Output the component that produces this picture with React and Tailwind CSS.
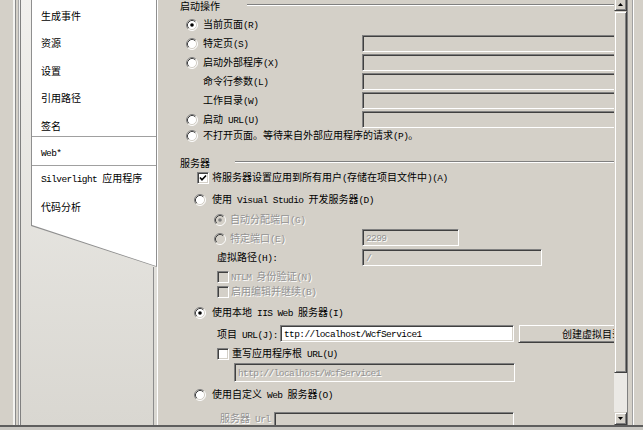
import React from 'react';

const ASCII = /^[\x20-\x7e]+$/;

const sunken =
  'border border-t-[#808080] border-l-[#808080] border-b-white border-r-white shadow-[inset_1px_1px_0_#404040,inset_-1px_-1px_0_#d4d0c8]';
const raised =
  'border border-t-[#d4d0c8] border-l-[#d4d0c8] border-b-[#404040] border-r-[#404040] shadow-[inset_1px_1px_0_#ffffff,inset_-1px_-1px_0_#808080]';

// CJK in Noto, half-width ASCII in a narrow mono, like SimSun
function Txt({ children, dim = false }) {
  const parts = String(children).split(/([\x20-\x7e]+)/).filter(Boolean);
  return (
    <span
      className={`whitespace-pre leading-[12px] ${
        dim ? 'text-[#939393] [text-shadow:1px_1px_0_#ffffff]' : 'text-black'
      }`}
    >
      {parts.map((p, i) =>
        ASCII.test(p) ? (
          <span key={i} className="font-['Liberation_Mono',monospace] text-[9.5px] tracking-[-0.6px]">
            {p}
          </span>
        ) : (
          <span key={i}>{p}</span>
        )
      )}
    </span>
  );
}

function Radio({ checked = false, dim = false }) {
  return (
    <svg width="12" height="12" viewBox="0 0 12 12" className="shrink-0">
      <circle cx="6" cy="6" r="5" fill={dim ? '#d4d0c8' : '#ffffff'} />
      <path d="M2.11 9.89 A5.5 5.5 0 0 1 9.89 2.11" fill="none" stroke="#808080" />
      <path d="M9.89 2.11 A5.5 5.5 0 0 1 2.11 9.89" fill="none" stroke="#ffffff" />
      <path d="M2.82 9.18 A4.5 4.5 0 0 1 9.18 2.82" fill="none" stroke="#404040" />
      <path d="M9.18 2.82 A4.5 4.5 0 0 1 2.82 9.18" fill="none" stroke="#d4d0c8" />
      {checked && <circle cx="6" cy="6" r="1.8" fill={dim ? '#808080' : '#000000'} />}
    </svg>
  );
}

function Check({ checked = false, dim = false }) {
  return (
    <span
      className={`w-[12px] h-[12px] shrink-0 flex items-center justify-center ${sunken} ${
        dim ? 'bg-[#d4d0c8]' : 'bg-white'
      }`}
    >
      {checked && (
        <svg width="8" height="8" viewBox="0 0 8 8">
          <polyline points="1,3.5 3,5.8 7,1.5" fill="none" stroke="#000" strokeWidth="1.6" />
        </svg>
      )}
    </span>
  );
}

function Field({ className = '', white = false, dim = false, children }) {
  return (
    <div
      className={`${sunken} ${white ? 'bg-white' : 'bg-[#d4d0c8]'} shrink-0 flex items-center pl-[3px] overflow-hidden ${className}`}
    >
      {children && <Txt dim={dim}>{children}</Txt>}
    </div>
  );
}

function Group({ label, labelW, className = '' }) {
  return (
    <div className={`flex items-center shrink-0 ${className}`}>
      <div className={`shrink-0 ${labelW}`}>
        <Txt>{label}</Txt>
      </div>
      <div className="flex-1 h-[2px] border-t border-t-[#808080] border-b border-b-white" />
    </div>
  );
}

function ArrowUp() {
  return (
    <svg width="5" height="3" viewBox="0 0 5 3">
      <polygon points="0,3 5,3 2.5,0" fill="#000" />
    </svg>
  );
}

function ArrowDown() {
  return (
    <svg width="5" height="3" viewBox="0 0 5 3">
      <polygon points="0,0 5,0 2.5,3" fill="#000" />
    </svg>
  );
}

const tabs = ['生成事件', '资源', '设置', '引用路径', '签名'];

export default function App() {
  return (
    <div className="w-[643px] h-[430px] overflow-hidden bg-[#d4d0c8] flex flex-col font-['Noto_Sans_CJK_SC',sans-serif] text-[10px]">
      <div className="flex h-[425px] shrink-0">
        {/* left window frame */}
        <div className="w-[13px] shrink-0 bg-[#d4d0c8]" />
        <div className="w-[2px] shrink-0 bg-[#f4f3f0]" />
        <div className="w-px shrink-0 bg-[#8a8a8a]" />
        <div className="w-[2px] shrink-0 bg-[#d4d0c8]" />
        <div className="w-px shrink-0 bg-[#a8a8a8]" />
        <div className="w-px shrink-0 bg-[#f0f0f0]" />
        <div className="w-px shrink-0 bg-[#808080]" />

        {/* tab list pane */}
        <div className="w-[137px] shrink-0 flex flex-col border-r border-r-white bg-linear-to-b from-[#f1f0ed] to-[#d9d7d1]">
          <div className="ml-[10px] w-[126px] h-[267px] shrink-0 bg-[#8f8f8f] [clip-path:polygon(0_0,100%_0,100%_100%,0_226px)]">
            <div className="ml-px w-[124px] h-[266px] bg-white [clip-path:polygon(0_0,100%_0,100%_100%,0_225px)] flex flex-col pt-[2px]">
              {tabs.map((t) => (
                <div key={t} className="h-[27.5px] shrink-0 flex items-center pl-[9px]">
                  <Txt>{t}</Txt>
                </div>
              ))}
              <div className="h-[30px] -mt-[4px] shrink-0 flex items-center pl-[9px] pt-[4px] border-y border-y-[#a0a0a0]">
                <Txt>Web*</Txt>
              </div>
              <div className="h-[27.5px] shrink-0 flex items-center pl-[9px]">
                <Txt>Silverlight 应用程序</Txt>
              </div>
              <div className="h-[27.5px] shrink-0 flex items-center pl-[9px]">
                <Txt>代码分析</Txt>
              </div>
            </div>
          </div>
          <div className="flex-1 mr-[3px] border-r border-r-[#8c8c8c]" />
        </div>

        {/* property page */}
        <div className="w-[456px] shrink-0 h-full overflow-hidden flex flex-col pl-[22px]">
          <Group label="启动操作" labelW="w-[67px]" className="h-[10px]" />

          <div className="h-[18px] mt-[6px] shrink-0 flex items-center pl-[6px] gap-[5px]">
            <Radio checked />
            <Txt>当前页面(R)</Txt>
          </div>
          <div className="h-[19px] shrink-0 flex items-center">
            <div className="w-[182px] shrink-0 flex items-center pl-[6px] gap-[5px]">
              <Radio />
              <Txt>特定页(S)</Txt>
            </div>
            <Field className="w-[260px] h-[17px]" />
          </div>
          <div className="h-[19px] shrink-0 flex items-center">
            <div className="w-[182px] shrink-0 flex items-center pl-[6px] gap-[5px]">
              <Radio />
              <Txt>启动外部程序(X)</Txt>
            </div>
            <Field className="w-[260px] h-[17px]" />
          </div>
          <div className="h-[19px] shrink-0 flex items-center">
            <div className="w-[182px] shrink-0 flex items-center pl-[23px]">
              <Txt>命令行参数(L)</Txt>
            </div>
            <Field className="w-[260px] h-[17px]" />
          </div>
          <div className="h-[19px] shrink-0 flex items-center">
            <div className="w-[182px] shrink-0 flex items-center pl-[23px]">
              <Txt>工作目录(W)</Txt>
            </div>
            <Field className="w-[260px] h-[17px]" />
          </div>
          <div className="h-[19px] shrink-0 flex items-center">
            <div className="w-[182px] shrink-0 flex items-center pl-[6px] gap-[5px]">
              <Radio />
              <Txt>启动 URL(U)</Txt>
            </div>
            <Field className="w-[260px] h-[17px]" />
          </div>
          <div className="h-[13px] shrink-0 flex items-center pl-[6px] gap-[5px]">
            <Radio />
            <Txt>不打开页面。等待来自外部应用程序的请求(P)。</Txt>
          </div>

          <Group label="服务器" labelW="w-[55px]" className="h-[12px] mt-[14px]" />

          <div className="h-[14px] mt-[3px] shrink-0 flex items-center pl-[17px] gap-[3px]">
            <Check checked />
            <Txt>将服务器设置应用到所有用户(存储在项目文件中)(A)</Txt>
          </div>
          <div className="h-[15px] mt-[7px] shrink-0 flex items-center pl-[14px] gap-[6px]">
            <Radio />
            <Txt>使用 Visual Studio 开发服务器(D)</Txt>
          </div>
          <div className="h-[14px] mt-[6px] shrink-0 flex items-center pl-[34px] gap-[4px]">
            <Radio checked dim />
            <Txt dim>自动分配端口(G)</Txt>
          </div>
          <div className="h-[19px] mt-px shrink-0 flex items-center">
            <div className="w-[182px] shrink-0 flex items-center pl-[34px] gap-[4px] pt-[2px]">
              <Radio dim />
              <Txt dim>特定端口(E)</Txt>
            </div>
            <Field className="w-[97px] h-[17px]" dim>
              2299
            </Field>
          </div>
          <div className="h-[19px] mt-px shrink-0 flex items-center">
            <div className="w-[182px] shrink-0 flex items-center pl-[37px]">
              <Txt>虚拟路径(H):</Txt>
            </div>
            <Field className="w-[180px] h-[17px]" dim>
              /
            </Field>
          </div>
          <div className="h-[13px] mt-[3px] shrink-0 flex items-center pl-[37px] gap-[2px]">
            <Check dim />
            <Txt dim>NTLM 身份验证(N)</Txt>
          </div>
          <div className="h-[12px] mt-[3px] shrink-0 flex items-center pl-[37px] gap-[2px]">
            <Check dim />
            <Txt dim>启用编辑并继续(B)</Txt>
          </div>
          <div className="h-[14px] mt-[8px] shrink-0 flex items-center pl-[14px] gap-[6px]">
            <Radio checked />
            <Txt>使用本地 IIS Web 服务器(I)</Txt>
          </div>
          <div className="h-[19px] mt-[4px] shrink-0 flex items-center pl-[37px]">
            <div className="w-[63px] shrink-0">
              <Txt>项目 URL(J):</Txt>
            </div>
            <Field className="w-[234px] h-[17px]" white>
              ttp://localhost/WcfService1
            </Field>
            <div
              className={`ml-[4px] w-[148px] h-[19px] shrink-0 flex items-center justify-center bg-[#d4d0c8] ${raised}`}
            >
              <Txt>创建虚拟目录</Txt>
            </div>
          </div>
          <div className="h-[14px] mt-[4px] shrink-0 flex items-center pl-[37px] gap-[3px]">
            <Check />
            <Txt>重写应用程序根 URL(U)</Txt>
          </div>
          <div className="h-[19px] mt-[2px] shrink-0 flex items-center pl-[54px]">
            <Field className="w-[281px] h-[19px]" dim>
              http://localhost/WcfService1
            </Field>
          </div>
          <div className="h-[14px] mt-[6px] shrink-0 flex items-center pl-[14px] gap-[6px]">
            <Radio />
            <Txt>使用自定义 Web 服务器(O)</Txt>
          </div>
          <div className="h-[20px] mt-[8px] shrink-0 flex items-start pl-[40px]">
            <div className="w-[54px] shrink-0">
              <Txt dim>服务器 Url</Txt>
            </div>
            <Field className="w-[240px] h-[18px] mt-[2px]" />
          </div>
        </div>

        {/* vertical scrollbar */}
        <div className="w-[13px] shrink-0 flex flex-col bg-[#ebe9e5]">
          <div className={`h-[13px] -mt-[2px] shrink-0 bg-[#d4d0c8] flex items-center justify-center ${raised}`}>
            <ArrowUp />
          </div>
          <div className={`h-[362px] shrink-0 bg-[#d4d0c8] ${raised}`} />
          <div className="flex-1" />
          <div className={`h-[13px] shrink-0 bg-[#d4d0c8] flex items-center justify-center ${raised}`}>
            <ArrowDown />
          </div>
        </div>

        {/* right window frame */}
        <div className="flex-1 flex">
          <div className="w-px bg-[#808080]" />
          <div className="w-[4px] bg-[#d4d0c8]" />
          <div className="w-px bg-[#a0a0a0]" />
          <div className="w-px bg-white" />
          <div className="flex-1 bg-[#d4d0c8]" />
        </div>
      </div>
      <div className="h-[2px] shrink-0 bg-[#5e5e5e]" />
      <div className="flex-1 bg-[#c9c7c2]" />
    </div>
  );
}
